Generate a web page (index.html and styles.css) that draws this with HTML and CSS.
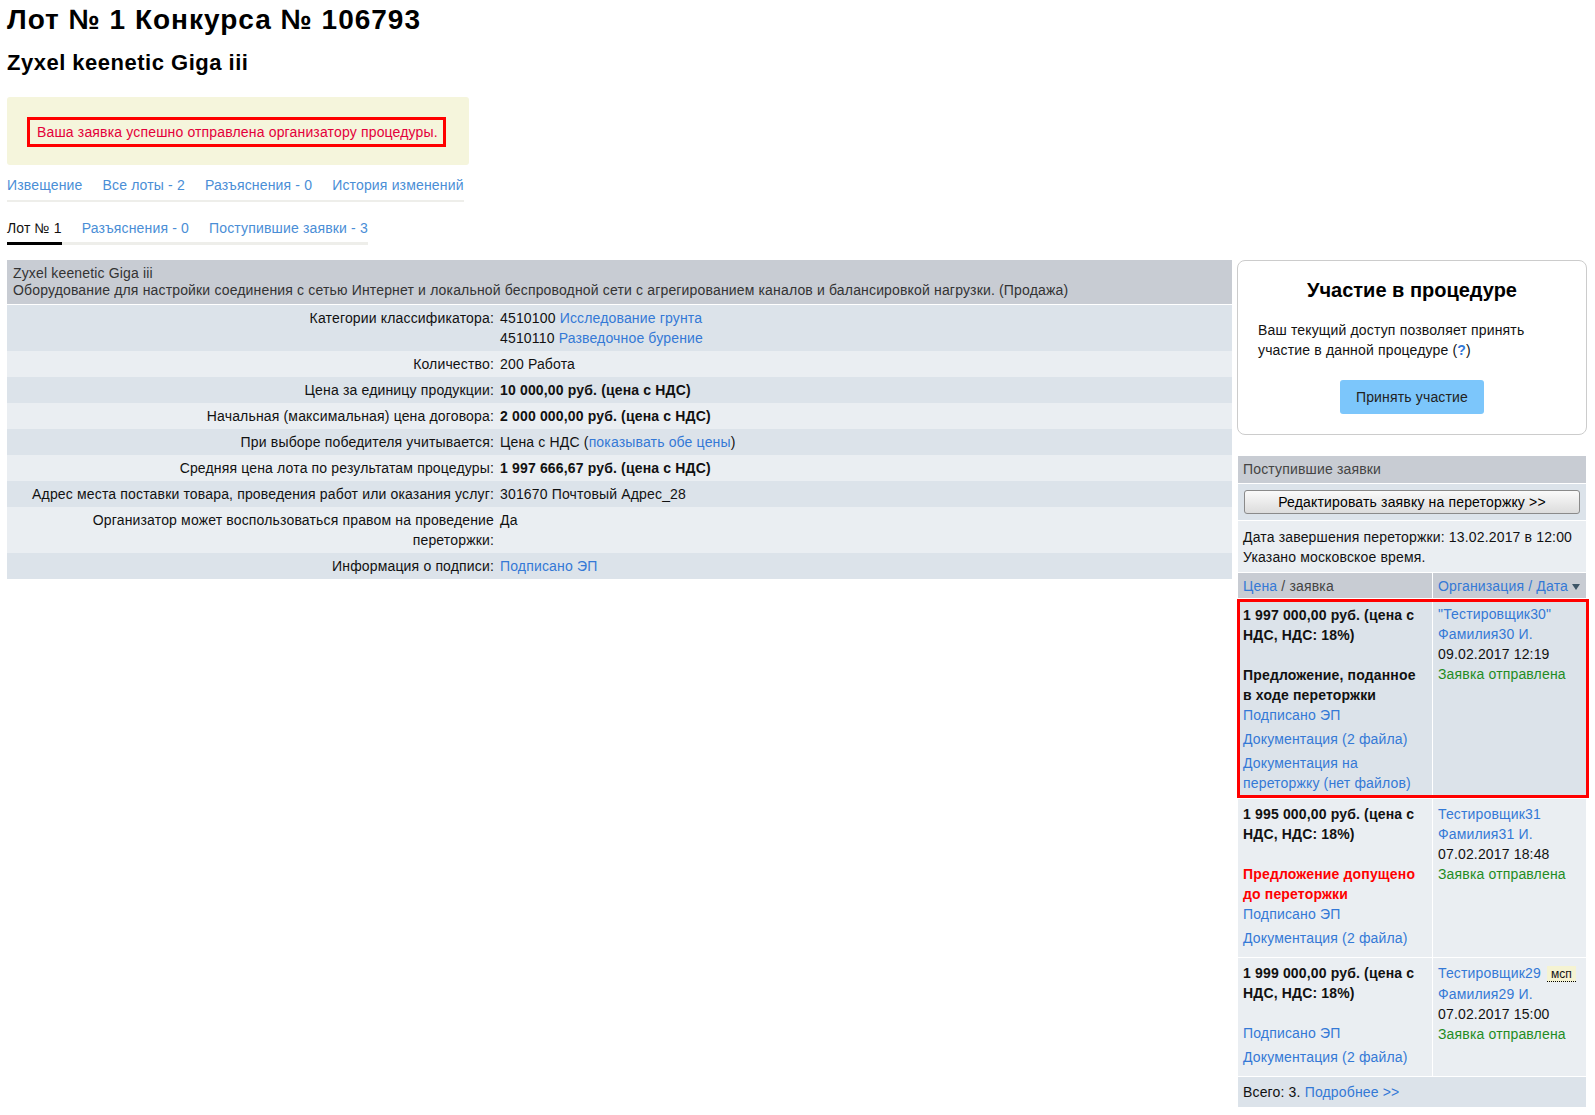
FILE: index.html
```html
<!DOCTYPE html>
<html lang="ru">
<head>
<meta charset="utf-8">
<title>Лот № 1 Конкурса № 106793</title>
<link rel="stylesheet" href="styles.css">
</head>
<body>
<h1 class="page-title">Лот № 1 Конкурса № 106793</h1>
<h2 class="page-subtitle">Zyxel keenetic Giga iii</h2>

<div class="notice">
  <span class="notice-msg">Ваша заявка успешно отправлена организатору процедуры.</span>
</div>

<nav class="tabs tabs-top">
  <a href="#">Извещение</a>
  <a href="#">Все лоты - 2</a>
  <a href="#">Разъяснения - 0</a>
  <a href="#">История изменений</a>
</nav>

<nav class="tabs tabs-lot">
  <span class="tab-active">Лот № 1</span>
  <a href="#">Разъяснения - 0</a>
  <a href="#">Поступившие заявки - 3</a>
</nav>

<div class="layout">
  <main class="main">
    <table class="lot-table">
      <tr class="lot-head">
        <td colspan="2">Zyxel keenetic Giga iii<br>Оборудование для настройки соединения с сетью Интернет и локальной беспроводной сети с агрегированием каналов и балансировкой нагрузки. (Продажа)</td>
      </tr>
      <tr class="dark">
        <th>Категории классификатора:</th>
        <td>4510100 <a href="#">Исследование грунта</a><br>4510110 <a href="#">Разведочное бурение</a></td>
      </tr>
      <tr class="light">
        <th>Количество:</th>
        <td>200 Работа</td>
      </tr>
      <tr class="dark">
        <th>Цена за единицу продукции:</th>
        <td><b>10 000,00 руб. (цена с НДС)</b></td>
      </tr>
      <tr class="light">
        <th>Начальная (максимальная) цена договора:</th>
        <td><b>2 000 000,00 руб. (цена с НДС)</b></td>
      </tr>
      <tr class="dark">
        <th>При выборе победителя учитывается:</th>
        <td>Цена с НДС (<a href="#">показывать обе цены</a>)</td>
      </tr>
      <tr class="light">
        <th>Средняя цена лота по результатам процедуры:</th>
        <td><b>1 997 666,67 руб. (цена с НДС)</b></td>
      </tr>
      <tr class="dark">
        <th>Адрес места поставки товара, проведения работ или оказания услуг:</th>
        <td>301670 Почтовый Адрес_28</td>
      </tr>
      <tr class="light">
        <th>Организатор может воспользоваться правом на проведение переторжки:</th>
        <td>Да</td>
      </tr>
      <tr class="dark">
        <th>Информация о подписи:</th>
        <td><a href="#">Подписано ЭП</a></td>
      </tr>
    </table>
  </main>

  <aside class="side">
    <section class="join">
      <h3 class="join-title">Участие в процедуре</h3>
      <p class="join-text">Ваш текущий доступ позволяет принять участие в данной процедуре (<a href="#" class="help">?</a>)</p>
      <button class="join-btn" type="button">Принять участие</button>
    </section>

    <section class="bids">
      <div class="bids-head">Поступившие заявки</div>
      <div class="bids-action"><button class="edit-btn" type="button">Редактировать заявку на переторжку &gt;&gt;</button></div>
      <div class="bids-note">Дата завершения переторжки: 13.02.2017 в 12:00<br>Указано московское время.</div>

      <div class="bid bid-cols">
        <div class="cell"><a href="#">Цена</a> / заявка</div>
        <div class="cell"><a href="#">Организация / Дата</a> <svg class="sort" width="8" height="6" viewBox="0 0 8 6"><path d="M0 0h8L4 6z" fill="#3d5566"/></svg></div>
      </div>

      <div class="bid bid-current">
        <div class="cell">
          <b>1 997 000,00 руб. (цена с НДС, НДС: 18%)</b>
          <div class="gap"></div>
          <b>Предложение, поданное в ходе переторжки</b>
          <a href="#" class="line">Подписано ЭП</a>
          <a href="#" class="doc">Документация (2 файла)</a>
          <a href="#" class="doc">Документация на переторжку (нет файлов)</a>
        </div>
        <div class="cell">
          <a href="#" class="line">"Тестировщик30"<br>Фамилия30 И.</a>
          <span class="line">09.02.2017 12:19</span>
          <span class="status">Заявка отправлена</span>
        </div>
      </div>

      <div class="bid">
        <div class="cell">
          <b>1 995 000,00 руб. (цена с НДС, НДС: 18%)</b>
          <div class="gap"></div>
          <b class="admitted">Предложение допущено до переторжки</b>
          <a href="#" class="line">Подписано ЭП</a>
          <a href="#" class="doc">Документация (2 файла)</a>
        </div>
        <div class="cell">
          <a href="#" class="line">Тестировщик31<br>Фамилия31 И.</a>
          <span class="line">07.02.2017 18:48</span>
          <span class="status">Заявка отправлена</span>
        </div>
      </div>

      <div class="bid">
        <div class="cell">
          <b>1 999 000,00 руб. (цена с НДС, НДС: 18%)</b>
          <div class="gap"></div>
          <a href="#" class="line">Подписано ЭП</a>
          <a href="#" class="doc">Документация (2 файла)</a>
        </div>
        <div class="cell">
          <span class="line"><a href="#">Тестировщик29</a> <abbr class="msp" title="Субъект малого и среднего предпринимательства">мсп</abbr></span>
          <a href="#" class="line">Фамилия29 И.</a>
          <span class="line">07.02.2017 15:00</span>
          <span class="status">Заявка отправлена</span>
        </div>
      </div>

      <div class="bids-foot">Всего: 3. <a href="#">Подробнее &gt;&gt;</a></div>
    </section>
  </aside>
</div>
</body>
</html>
```

FILE: styles.css
```css
body {
  margin: 0;
  padding: 0 8px 20px 7px;
  font-family: "Liberation Sans", Arial, sans-serif;
  font-size: 14px;
  letter-spacing: 0.16px;
  color: #111;
  background: #fff;
}

a {
  color: #3479d6;
  text-decoration: none;
}

.page-title {
  margin: 4px 0 0;
  font-size: 28px;
  line-height: 32px;
  letter-spacing: 1px;
  font-weight: bold;
  color: #000;
}

.page-subtitle {
  margin: 14px 0 0;
  font-size: 22px;
  line-height: 26px;
  letter-spacing: 0.5px;
  font-weight: bold;
  color: #000;
}

/* success message */
.notice {
  width: fit-content;
  margin-top: 21px;
  padding: 20px 23px 18px 20px;
  background: #f5f5dc;
  border-radius: 3px;
}

.notice-msg {
  display: block;
  padding: 1px 5px 1px 7px;
  border: 3px solid #f00;
  line-height: 22px;
  color: #e4003a;
}

/* tab strips */
.tabs {
  display: flex;
  gap: 20px;
  width: fit-content;
  line-height: 20px;
}

.tabs a {
  color: #4a8ed6;
}

.tabs-top {
  margin-top: 10px;
  padding-bottom: 5px;
  border-bottom: 2px solid #eeeeea;
}

.tabs-lot {
  margin-top: 16px;
  border-bottom: 3px solid #eeeeea;
}

.tabs-lot > * {
  padding-bottom: 4px;
  margin-bottom: -3px;
  border-bottom: 3px solid transparent;
}

.tabs-lot .tab-active {
  color: #111;
  border-bottom-color: #000;
}

/* two columns: lot card + sidebar */
.layout {
  display: flex;
  gap: 5px;
  align-items: flex-start;
  margin-top: 15px;
}

.main {
  flex: 1;
  min-width: 0;
}

.side {
  flex: 0 0 350px;
}

/* lot card */
.lot-table {
  width: 100%;
  border-collapse: collapse;
}

.lot-table td,
.lot-table th {
  padding: 3px;
  line-height: 20px;
  vertical-align: top;
}

.lot-table th {
  width: 40%;
  text-align: right;
  font-weight: normal;
}

.lot-table .lot-head td {
  padding: 5px 6px 5px;
  line-height: 17px;
  background: #c8ccd3;
  color: #333;
  border-bottom: 1px solid #fff;
}

.lot-table tr.dark {
  background: #dce3ea;
}

.lot-table tr.light {
  background: #eaeef2;
}

/* participation box */
.join {
  border: 1px solid #ccc;
  border-radius: 8px;
  padding: 18px 20px 20px;
  text-align: center;
}

.join-title {
  margin: 0;
  font-size: 20px;
  line-height: 23px;
  letter-spacing: 0;
  color: #000;
}

.join-text {
  margin: 18px 0 0;
  text-align: left;
  line-height: 20px;
}

.help {
  font-weight: bold;
}

.join-btn {
  margin-top: 20px;
  width: 144px;
  height: 34px;
  border: 0;
  border-radius: 3px;
  background: #7cc6fb;
  font: 14px "Liberation Sans", Arial, sans-serif;
  letter-spacing: 0.16px;
  color: #222;
}

/* incoming bids */
.bids {
  margin: 21px 1px 0;
  line-height: 20px;
}

.bids > * + * {
  border-top: 1px solid #fff;
}

.bids-head {
  padding: 3px 5px 4px;
  background: #c8ccd3;
  color: #444;
}

.bids-action {
  padding: 6px 6px 6px;
  background: #dce3ea;
}

.edit-btn {
  display: block;
  width: 100%;
  height: 24px;
  border: 1px solid #8a8a8a;
  border-radius: 3px;
  background: linear-gradient(#fafafa, #dcdcdc);
  font: 14px "Liberation Sans", Arial, sans-serif;
  letter-spacing: 0.16px;
  color: #000;
}

.bids-note {
  padding: 6px 5px 5px;
  background: #eaeef2;
}

.bid {
  display: grid;
  grid-template-columns: 194px 1fr;
  column-gap: 1px;
  background: #fff;
}

.bid .cell {
  padding: 5px 5px;
  background: #eaeef2;
}

.bid .cell > b,
.bid .cell > .line,
.bid .cell > .doc,
.bid .cell > .status {
  display: block;
}

.bid .cell > .doc {
  margin: 4px 0;
}

.bid .gap {
  height: 20px;
}

.bid-cols .cell {
  padding: 3px 5px 2px;
  background: #c8ccd3;
  color: #444;
}

.bid-cols .sort {
  vertical-align: 1px;
}

/* the bid sent by the current user, framed in red */
.bid-current {
  position: relative;
}

.bid-current .cell {
  background: #dce3ea;
}

.bid-current .cell:first-child {
  padding-top: 6px;
}

.bid-current .cell > .doc:last-child {
  margin-bottom: 0;
}

.bid-current::after {
  content: "";
  position: absolute;
  left: -1px;
  right: -3px;
  top: 0;
  bottom: 0;
  border: 3px solid #f00;
  pointer-events: none;
}

.admitted {
  color: #f00;
}

.status {
  color: #1f8c1f;
}

.msp {
  font-size: 12px;
  letter-spacing: 0;
  padding: 1px 4px 0;
  margin-left: 2px;
  background: #f5f3d2;
  text-decoration: none;
  border-bottom: 1px dotted #000;
  color: #111;
}

.bids-foot {
  padding: 5px 5px 5px;
  background: #dce3ea;
}
```
